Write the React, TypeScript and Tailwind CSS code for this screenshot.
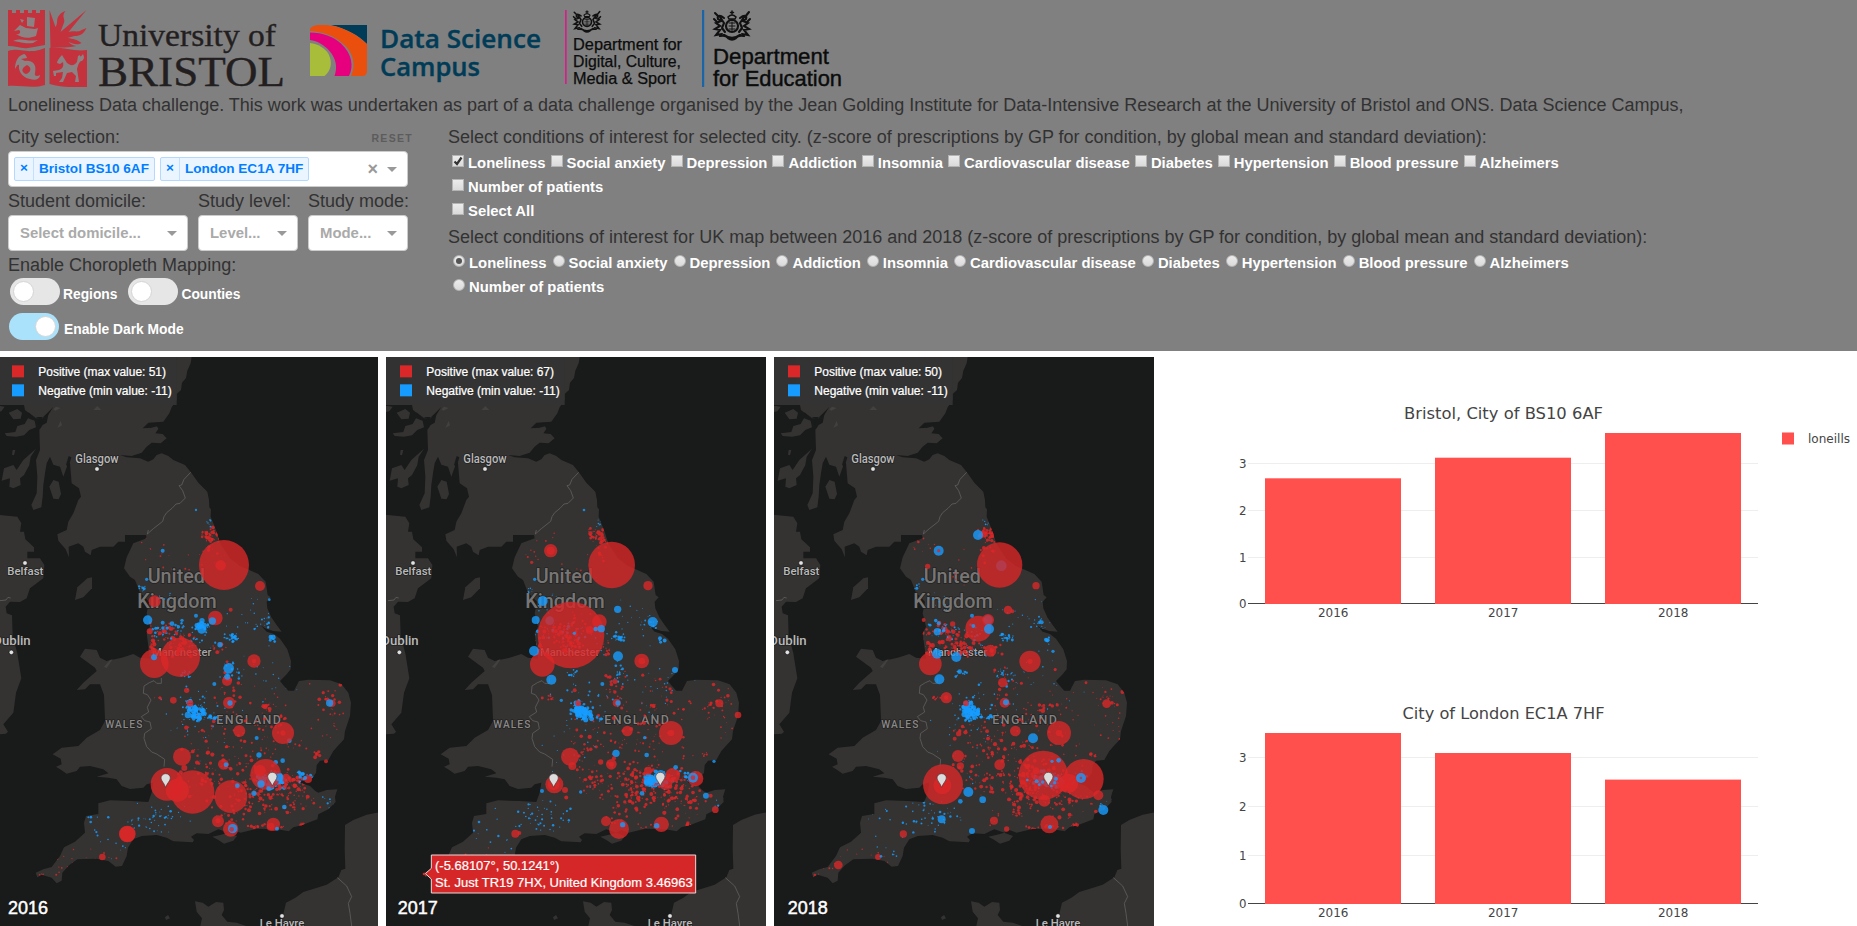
import React from "react";

type Bubble = [number, number, number];
type Cluster = [number, number, number, number, number, number, "r" | "b"];

const RED = "#da2728";
const BLUE = "#169cff";

const LAND = [
  // Great Britain
  "M575 21L572 40 562 62 558 84 546 98 543 120 530 132 530 150 515 172 508 190 490 215 445 218 428 235 445 234 468 222 475 237 466 250 488 252 500 265 482 280 455 278 440 290 425 308 395 318 360 315 380 322 420 325 445 335 460 328 470 315 485 310 505 318 520 330 555 345 575 370 595 398 622 425 627 450 628 472 633 478 632 500 640 520 650 545 655 562 662 582 690 625 720 648 748 660 775 672 797 695 803 735 812 742 800 755 802 775 814 802 830 825 845 845 820 843 795 835 782 826 800 845 822 852 840 866 862 898 873 933 872 958 860 973 840 993 852 1008 865 1022 882 1022 897 993 925 989 990 991 1025 1003 1045 1028 1053 1058 1050 1098 1035 1143 1032 1168 1000 1203 985 1230 960 1232 950 1246 948 1268 938 1283 905 1293 900 1298 930 1308 945 1322 955 1328 980 1320 1012 1318 1005 1340 1007 1356 985 1378 955 1393 952 1408 905 1426 880 1432 866 1444 832 1438 772 1436 722 1448 700 1440 685 1448 655 1438 625 1452 590 1450 573 1460 582 1470 578 1477 520 1474 500 1463 470 1455 425 1458 400 1468 384 1493 380 1518 366 1548 347 1550 325 1533 290 1526 232 1528 207 1546 187 1568 185 1592 170 1600 155 1583 125 1574 112 1582 107 1568 130 1558 155 1551 180 1518 192 1492 225 1475 255 1448 252 1418 258 1398 295 1392 295 1360 330 1351 395 1353 445 1356 455 1328 460 1298 440 1303 430 1313 390 1317 365 1308 350 1288 325 1283 290 1280 325 1270 310 1258 270 1248 240 1250 230 1263 200 1271 180 1258 168 1250 185 1243 182 1226 158 1213 185 1193 235 1188 260 1163 300 1140 315 1113 312 1035 300 1003 270 1003 255 1018 230 1020 250 998 290 963 285 953 240 920 255 896 290 900 300 923 320 933 365 923 400 912 420 923 450 926 445 888 440 850 450 830 440 790 447 755 420 728 405 690 390 680 372 655 380 622 400 580 440 565 438 555 375 555 375 575 355 575 340 590 300 590 275 600 272 616 255 605 250 590 235 580 206 590 207 622 197 598 175 572 172 553 200 540 205 515 220 490 235 450 243 440 237 415 215 400 210 340 206 335 190 380 180 350 160 344 150 320 140 340 135 370 130 405 128 440 124 472 100 480 94 465 110 430 112 380 108 330 120 300 118 240 128 225 140 218 145 195 160 170 128 205 108 205 90 192 75 180 72 165 60 150 60 21Z",
  // Ireland
  "M0 495L52 500 64 520 60 545 72 545 76 568 102 592 102 605 82 605 82 625 120 625 133 645 130 685 110 700 90 715 80 745 60 756 30 755 17 770 20 790 36 796 38 858 52 910 64 985 48 1028 40 1088 10 1123 24 1145 18 1151 -6 1153 -6 495Z",
  // islands
  "M225 750L232 712 262 685 276 682 276 715 250 742Z",
  "M148 410L160 390 176 395 183 432 176 448 160 446Z",
  "M26 188L52 177 66 188 62 206 40 208Z",
  "M14 250L46 246 52 228 74 222 84 205 104 212 108 232 88 240 72 256 48 260 20 258Z",
  "M108 296L92 320 88 345 72 375 60 385 62 405 40 415 28 410 30 385 5 392 12 355 40 345 50 360 70 330Z",
  "M0 168L14 170 4 184 -6 186 -6 168Z",
  "M38 300L46 300 42 316 36 314Z",
  "M637 1460L660 1455 685 1448 711 1458 700 1472 672 1481 655 1470Z",
  "M495 1702L504 1695 510 1705 498 1710Z",
  // France
  "M1140 1386L1100 1394 1060 1410 1035 1425 1034 1500 1036 1556 1024 1560 1015 1582 980 1604 910 1626 885 1644 858 1658 845 1712 900 1728 1140 1728Z",
  "M585 1654L608 1658 625 1670 648 1656 670 1658 672 1680 665 1695 682 1715 710 1718 750 1732 600 1732 606 1705 590 1685Z",
];

const BORDERS = [
  "M572 367L552 388 545 405 537 407 548 422 556 444 540 460 528 462 516 475 500 488 492 500 488 514 460 536 442 552 445 540",
  "M484 984L484 1000 470 1000 462 992 448 998 432 1008 430 1030 442 1034 453 1050 442 1072 446 1086 424 1100 434 1112 450 1116 454 1136 434 1150 432 1165 440 1190 455 1206 470 1212 494 1228 492 1250",
  "M1012 1583L1040 1608 1055 1640 1045 1660 1050 1690 1055 1728",
  "M0 752L18 750 24 742 32 744",
];

// [cx, cy, spreadX, spreadY, count, maxRadius, colour]
const COMMON: Cluster[] = [
  [632, 556, 28, 22, 48, 6.5, "r"],
  [640, 600, 28, 40, 14, 6, "r"],
  [630, 520, 10, 14, 6, 3, "b"],
  [455, 590, 50, 45, 10, 4, "r"],
  [560, 660, 70, 60, 9, 3, "r"],
  [425, 715, 8, 14, 7, 5, "b"],
  [480, 750, 60, 40, 9, 3, "b"],
  [495, 850, 50, 30, 36, 7, "r"],
  [500, 840, 60, 30, 22, 5.5, "b"],
  [550, 885, 38, 34, 48, 6, "r"],
  [455, 895, 16, 24, 18, 7, "r"],
  [580, 860, 80, 50, 26, 4, "b"],
  [692, 862, 22, 14, 26, 5, "b"],
  [790, 820, 30, 22, 16, 4, "b"],
  [740, 800, 70, 50, 14, 2.5, "b"],
  [818, 868, 14, 10, 7, 7, "b"],
  [655, 895, 22, 20, 13, 6, "r"],
  [555, 972, 18, 14, 13, 4, "b"],
  [570, 1070, 18, 16, 40, 7, "b"],
  [590, 1092, 26, 20, 70, 8, "b"],
  [600, 1060, 70, 60, 26, 4, "b"],
  [637, 1103, 14, 6, 10, 6, "b"],
  [690, 970, 28, 34, 20, 4, "b"],
  [690, 1010, 40, 70, 24, 5.5, "r"],
  [800, 1000, 120, 110, 24, 2.5, "b"],
  [820, 1080, 110, 120, 42, 5, "r"],
  [798, 1072, 12, 10, 8, 7, "r"],
  [990, 1040, 45, 50, 20, 6, "r"],
  [1000, 1120, 60, 60, 14, 3, "r"],
  [950, 1213, 8, 10, 7, 6, "r"],
  [640, 1180, 110, 95, 58, 6.5, "r"],
  [800, 1190, 120, 80, 30, 4.5, "r"],
  [560, 1160, 100, 140, 26, 2.5, "b"],
  [480, 1045, 16, 8, 7, 4.5, "r"],
  [620, 1290, 80, 65, 42, 6, "r"],
  [760, 1290, 70, 65, 70, 6, "r"],
  [815, 1290, 46, 26, 70, 7, "b"],
  [850, 1290, 60, 36, 55, 6.5, "r"],
  [880, 1345, 75, 60, 64, 6.5, "r"],
  [760, 1350, 80, 50, 42, 6, "r"],
  [910, 1280, 34, 22, 14, 6, "b"],
  [800, 1430, 60, 8, 14, 5.5, "r"],
  [900, 1424, 12, 6, 6, 6, "r"],
  [680, 1400, 50, 30, 15, 5, "r"],
  [470, 1400, 90, 50, 46, 4, "b"],
  [290, 1410, 50, 50, 8, 4, "b"],
  [360, 1500, 60, 40, 9, 3, "b"],
  [290, 1520, 90, 30, 9, 3, "r"],
  [190, 1545, 50, 35, 8, 4, "r"],
  [120, 1573, 14, 6, 4, 3.5, "r"],
  [990, 1360, 24, 26, 7, 3.5, "b"],
];

type MapSpec = {
  id: string;
  year: string;
  max: string;
  seed: number;
  under: [Bubble, string][];
  extra: Cluster[];
};

const r = (x: number, y: number, s: number): [Bubble, string] => [[x, y, s], RED];
const b = (x: number, y: number, s: number): [Bubble, string] => [[x, y, s], BLUE];

const MAPS: MapSpec[] = [
  {
    id: "m16",
    year: "2016",
    max: "51",
    seed: 11,
    extra: [
      [605, 832, 26, 12, 26, 9, "b"],
      [790, 1295, 18, 16, 26, 10, "b"],
      [835, 1290, 14, 16, 24, 9, "b"],
    ],
    under: [
      r(672, 645, 75), r(662, 646, 16), b(488, 602, 6), b(588, 480, 3.5), r(780, 708, 15), r(464, 754, 18), r(646, 804, 22), b(637, 813, 11),
      b(443, 810, 14), r(449, 844, 9), b(605, 838, 13), b(606, 812, 8), b(588, 797, 6), b(516, 821, 7), b(546, 811, 5), b(488, 818, 6), b(440, 688, 5), b(808, 749, 4), r(692, 779, 6),
      r(463, 941, 43), r(541, 922, 59), b(462, 922, 9), b(686, 955, 16), r(762, 933, 20), r(762, 933, 7), r(681, 993, 15), b(682, 980, 9), r(560, 1021, 8), r(520, 1051, 10), r(570, 1060, 10),
      r(687, 1058, 18), b(690, 1059, 8), b(660, 884, 8), b(819, 862, 8), r(996, 1060, 11), b(989, 1059, 11), b(868, 1172, 7), r(849, 1149, 33), r(849, 1149, 8), r(718, 1143, 18), b(770, 1164, 6),
      b(777, 1215, 8), b(848, 1232, 7), b(827, 1237, 7), r(546, 1220, 27), r(553, 1254, 9), r(670, 1243, 16), b(678, 1244, 7), r(501, 1303, 49), r(578, 1326, 65), r(532, 1321, 35),
      r(693, 1340, 49), b(712, 1307, 7), r(797, 1273, 46), r(780, 1262, 18), b(762, 1330, 8), r(858, 1284, 13), r(924, 1287, 12), b(915, 1284, 6), b(901, 1272, 6), r(978, 1234, 6),
      b(783, 1302, 11), b(838, 1282, 12), b(806, 1316, 7),
      r(654, 1414, 18), r(654, 1412, 8), r(692, 1437, 23), b(698, 1436, 14), r(695, 1438, 7), r(820, 1423, 20), r(812, 1430, 12), b(831, 1436, 6), b(853, 1371, 7), r(382, 1452, 25), r(382, 1452, 24), r(307, 1521, 10), b(272, 1416, 4), b(564, 1095, 10), b(643, 1002, 6),
    ],
  },
  {
    id: "m17",
    year: "2017",
    max: "67",
    seed: 29,
    extra: [
      [760, 1310, 50, 45, 26, 7, "r"],
      [550, 835, 80, 50, 40, 6, "r"],
      [790, 1286, 20, 16, 24, 9, "b"],
    ],
    under: [
      r(671, 645, 70), r(488, 602, 20), r(488, 602, 12), b(588, 480, 4), r(780, 707, 14), b(464, 753, 15), b(443, 810, 12), b(485, 812, 13), r(431, 637, 5), b(440, 688, 5), b(689, 778, 11), b(794, 816, 15),
      r(549, 855, 100), r(634, 815, 22), r(605, 840, 12), b(640, 836, 11), b(623, 837, 7), b(559, 850, 5), r(463, 943, 37), b(438, 903, 15), b(490, 989, 15), b(690, 919, 15), r(761, 933, 22), r(761, 933, 10),
      b(861, 960, 9), r(681, 994, 8), r(686, 1058, 12), b(690, 1059, 8), r(570, 1060, 9), r(994, 1060, 12), r(1050, 1095, 10), r(849, 1149, 36), r(849, 1149, 10), r(718, 1143, 16), b(770, 1163, 5),
      b(684, 1210, 11), b(776, 1215, 7), r(638, 1236, 8), r(670, 1243, 16), r(670, 1243, 8), r(546, 1220, 27), r(553, 1248, 12), r(499, 1303, 27), r(497, 1303, 18), r(531, 1320, 9), b(578, 1326, 5),
      b(782, 1295, 15), b(818, 1276, 16), r(780, 1262, 12), r(854, 1276, 22), r(833, 1300, 20), r(923, 1286, 23), b(915, 1283, 15), r(915, 1283, 7), b(863, 1252, 7), b(954, 1337, 9), r(968, 1337, 6), r(982, 1379, 10),
      b(762, 1330, 7), r(654, 1414, 15), r(693, 1437, 30), b(704, 1424, 8), r(820, 1423, 23), b(806, 1427, 8), r(382, 1451, 12), r(394, 1449, 6), b(273, 1416, 4), b(462, 1323, 6), b(978, 1234, 5), b(520, 1051, 5), b(643, 1002, 6), r(560, 1021, 6),
    ],
  },
  {
    id: "m18",
    year: "2018",
    max: "50",
    seed: 47,
    extra: [
      [760, 1300, 60, 55, 46, 7, "r"],
      [560, 880, 60, 30, 36, 7, "r"],
      [820, 1290, 42, 20, 30, 8, "b"],
      [640, 1200, 105, 75, 30, 6, "r"],
    ],
    under: [
      b(676, 647, 16), r(671, 645, 68), b(606, 555, 15), b(488, 602, 15), r(488, 602, 5), r(455, 649, 8), b(440, 688, 5), r(780, 707, 11), r(696, 780, 13), r(709, 784, 6),
      r(607, 836, 39), b(636, 810, 14), r(636, 810, 18), b(639, 837, 15), b(592, 828, 6), b(588, 797, 6), b(484, 845, 11), b(797, 817, 6), r(530, 822, 8), b(488, 820, 6), r(443, 810, 6),
      r(463, 942, 34), b(483, 911, 15), b(541, 921, 15), b(490, 988, 15), b(551, 965, 7), r(643, 902, 18), b(831, 904, 5), r(762, 934, 32), r(762, 934, 8), r(680, 998, 14),
      r(686, 1058, 15), b(690, 1057, 9), r(511, 1043, 17), r(511, 1043, 7), r(570, 1060, 9), r(992, 1061, 13), r(849, 1149, 36), r(849, 1149, 10), r(718, 1143, 16), b(771, 1165, 15), r(548, 1151, 8), r(536, 1166, 6),
      r(546, 1218, 18), r(553, 1248, 11), r(671, 1244, 16), r(802, 1276, 74), r(923, 1287, 60), r(878, 1300, 29), r(805, 1352, 18), r(780, 1262, 10), b(915, 1284, 15), r(915, 1284, 4), r(967, 1336, 15), b(982, 1380, 15), b(848, 1231, 7), b(828, 1234, 5),
      b(840, 1286, 6), b(782, 1294, 6), b(800, 1296, 5), b(790, 1304, 4), b(836, 1298, 5), b(826, 1308, 4), b(754, 1290, 4),
      r(501, 1303, 60), r(499, 1306, 27), r(499, 1306, 15), b(577, 1326, 15), b(620, 1349, 10), b(553, 1354, 7), b(497, 1408, 12), b(588, 1443, 9), r(654, 1412, 12), r(692, 1437, 8), r(820, 1423, 27), b(822, 1431, 6),
      r(382, 1452, 11), r(306, 1521, 9), r(187, 1545, 13), b(315, 1519, 4), r(904, 1425, 5), b(590, 1090, 10),
    ],
  },
];

function makeRandom(seed: number) {
  let s = seed * 2654435761;
  return () => {
    s = (s + 0x6d2b79f5) | 0;
    let t = Math.imul(s ^ (s >>> 15), 1 | s);
    t = (t + Math.imul(t ^ (t >>> 7), 61 | t)) ^ t;
    return ((t ^ (t >>> 14)) >>> 0) / 4294967296;
  };
}

function scatter(clusters: Cluster[], seed: number) {
  const rand = makeRandom(seed);
  const out: [Bubble, string][] = [];
  clusters.forEach(([cx, cy, sx, sy, n, max, c]) => {
    for (let i = 0; i < n; i++) {
      const x = cx + (rand() + rand() - 1) * sx * 1.2;
      const y = cy + (rand() + rand() - 1) * sy * 1.2;
      const size = 1.4 + Math.pow(rand(), 1.7) * (max - 1.4);
      out.push([[x, y, size], c === "r" ? RED : BLUE]);
    }
  });
  return out;
}

function Place({ x, y, w, size, fill, spacing, children }: { x: number; y: number; w: number; size: number; fill: string; spacing?: number; children: string }) {
  return (
    <text x={x} y={y} fontSize={size} fill={fill} textLength={w} letterSpacing={spacing} lengthAdjust="spacingAndGlyphs" stroke="#1c1c1c" strokeWidth="5" strokeOpacity="0.75" paintOrder="stroke" strokeLinejoin="round" fontFamily="Roboto, sans-serif" fontWeight={500}>
      {children}
    </text>
  );
}

function Pin({ x, y }: { x: number; y: number }) {
  return <path d={`M${x} ${y + 20}C${x - 4} ${y + 8} ${x - 14} ${y} ${x - 14} ${y - 8}A14 13 0 1 1 ${x + 14} ${y - 8}C${x + 14} ${y} ${x + 4} ${y + 8} ${x} ${y + 20}Z`} fill="#dcdcdc" stroke="#4b3a38" strokeWidth="2" />;
}

function BubbleMap({ spec, first }: { spec: MapSpec; first?: boolean }) {
  const small = scatter([...COMMON, ...spec.extra], spec.seed);
  const left = first ? 0 : -6;
  const yearX = spec.year === "2016" ? 24 : spec.year === "2017" ? 29 : 35;
  return (
    <svg className={first ? "block h-[569px] w-[378px] shrink-0" : "block h-[569px] w-[380px] shrink-0"} viewBox={first ? "0 21 1134 1707" : "-6 21 1140 1707"}>
      <defs>
        <clipPath id={spec.id}>
          {LAND.map((d) => <path key={d} d={d} />)}
        </clipPath>
      </defs>
      <rect x={-6} y={21} width={1146} height={1707} fill="#191a1a" />
      {LAND.map((d) => <path key={d} d={d} fill="#343332" />)}
      <g fill="#191a1a">
        <path d="M440 232L456 220 472 222 474 228 452 234Z" />
        <path d="M206 318L214 322 206 350 198 345Z" />
        <path d="M72 168L90 195 122 208 150 182 136 200 104 202 84 186Z" />
      </g>
      <g fill="#424140">
        <path d="M280 180L292 168 304 180Z" />
        <path d="M160 178L168 170 182 174 166 182Z" />
        <path d="M172 234L182 212 186 226Z" />
        <path d="M312 950L330 930 338 928 320 954Z" />
      </g>
      {BORDERS.map((d) => <path key={d} d={d} fill="none" stroke="#62615f" strokeWidth="2.4" strokeLinejoin="round" />)}

      <Place x={226} y={339} w={130} size={36} fill="#b9b9b9">Glasgow</Place>
      <Place x={22} y={675} w={108} size={35} fill="#b9b9b9">Belfast</Place>
      <Place x={-20} y={884} w={112} size={36} fill="#b9b9b9">Dublin</Place>
      <Place x={443} y={699} w={172} size={58} fill="#777675">United</Place>
      <Place x={412} y={775} w={238} size={58} fill="#777675">Kingdom</Place>
      <Place x={456} y={917} w={178} size={32} fill="#a5a5a5">Manchester</Place>
      <Place x={316} y={1134} w={114} size={30} fill="#8a8988" spacing={3}>WALES</Place>
      <Place x={649} y={1123} w={198} size={36} fill="#848382" spacing={4}>ENGLAND</Place>
      <Place x={779} y={1732} w={134} size={34} fill="#b9b9b9">Le Havre</Place>
      <g fill="#e2e2e2" stroke="#111" strokeWidth="2">
        <circle cx={291} cy={357} r={7} />
        <circle cx={75} cy={639} r={7} />
        <circle cx={34} cy={907} r={7} />
        <circle cx={846} cy={1698} r={7} />
      </g>

      <g clipPath={`url(#${spec.id})`}>
        {small.map(([[x, y, s], c], i) => <circle key={i} cx={x} cy={y} r={s} fill={c} fillOpacity={0.86} />)}
      </g>
      {spec.under.map(([[x, y, s], c], i) => <circle key={i} cx={x} cy={y} r={s} fill={c} fillOpacity={0.8} />)}
      <Pin x={497} y={1292} />
      <Pin x={817} y={1288} />

      <rect x={left} y={21} width={530 - left} height={144} fill="#333333" fillOpacity={0.98} />
      <rect x={36} y={46} width={36} height={36} fill={RED} />
      <rect x={36} y={103} width={36} height={36} fill={BLUE} />
      <g fontFamily="Liberation Sans, Arial, sans-serif" fill="#fff">
        <text x={115} y={79} fontSize={36} textLength={383} lengthAdjust="spacingAndGlyphs" stroke="#fff" strokeWidth={0.7}>{`Positive (max value: ${spec.max})`}</text>
        <text x={115} y={135} fontSize={36} textLength={400} lengthAdjust="spacingAndGlyphs" stroke="#fff" strokeWidth={0.7}>Negative (min value: -11)</text>
        <text x={yearX} y={1691} fontSize={54} textLength={120} lengthAdjust="spacingAndGlyphs" stroke="#fff" strokeWidth={1.4}>{spec.year}</text>
      </g>
      {spec.year === "2017" && (
        <g fontFamily="Liberation Sans, Arial, sans-serif" fill="#fff">
          <path d="M130 1515H923V1629H130V1587L112 1571 130 1555Z" fill="#d62728" stroke="#e9d9d8" strokeWidth={3} />
          <circle cx={108} cy={1572} r={4} fill={RED} />
          <text x={141} y={1560} fontSize={39} textLength={373} lengthAdjust="spacingAndGlyphs" stroke="#fff" strokeWidth={0.6}>(-5.68107°, 50.1241°)</text>
          <text x={141} y={1611} fontSize={39} textLength={773} lengthAdjust="spacingAndGlyphs" stroke="#fff" strokeWidth={0.6}>St. Just TR19 7HX, United Kingdom 3.46963</text>
        </g>
      )}
    </svg>
  );
}

type ChartSpec = { title: string; tw: number; ty: number; base: number; ticks: number[]; tops: number[] };

const CHARTS: ChartSpec[] = [
  { title: "Bristol, City of BS10 6AF", tw: 199, ty: 419, base: 603.5, ticks: [557.5, 510.5, 463.5], tops: [478.3, 457.7, 433] },
  { title: "City of London EC1A 7HF", tw: 202, ty: 719, base: 903.5, ticks: [855.5, 806.5, 757.5], tops: [733, 753, 779.6] },
];

function Charts() {
  return (
    <svg className="block h-[569px] w-[703px] shrink-0" viewBox="1154 357 703 569" fontFamily="DejaVu Sans, Verdana, sans-serif" fill="#444">
      {CHARTS.map((c) => (
        <g key={c.title}>
          <text x={1503.5 - c.tw / 2} y={c.ty} fontSize={16} textLength={c.tw} lengthAdjust="spacingAndGlyphs">{c.title}</text>
          {c.ticks.map((t, i) => (
            <g key={t}>
              <rect x={1248} y={t - 0.5} width={510} height={1} fill="#eee" />
              <text x={1239} y={t + 4} fontSize={11.5} textLength={7.5} lengthAdjust="spacingAndGlyphs">{i + 1}</text>
            </g>
          ))}
          <text x={1239} y={c.base + 4} fontSize={11.5} textLength={7.5} lengthAdjust="spacingAndGlyphs">0</text>
          <rect x={1248} y={c.base - 0.5} width={510} height={1} fill="#444" />
          {c.tops.map((t, i) => (
            <g key={i}>
              <rect x={1265 + i * 170} y={t} width={136} height={c.base + 0.5 - t} fill="#ff504e" />
              <text x={1318 + i * 170} y={c.base + 13.5} fontSize={11.5} textLength={30.5} lengthAdjust="spacingAndGlyphs">{2016 + i}</text>
            </g>
          ))}
        </g>
      ))}
      <rect x={1782} y={432.5} width={12} height={12} fill="#ff504e" />
      <text x={1808} y={443} fontSize={12} textLength={42} lengthAdjust="spacingAndGlyphs">loneills</text>
    </svg>
  );
}

function BristolLogo() {
  return (
    <svg className="block h-[84px] w-[290px]" viewBox="8 7 290 84">
      <g fill="#c4323d">
        <path d="M8 10h4v3h4v-3h4v3h4v-3h4v3h4v-3h4v3h4v-3h5v35c-6 1-10 2-17 3-7 1-12-2-20-2z" />
        <path d="M49.500 10l6 17c3-4 0-8 4-12 1-2 3-3 6-4-5 6 1 8-2 13l-3 8 26-22-18 22c5-2 9 1 13-2l5-2c-3 6-6 8-12 8l-7 2c6 1 9 1 14 5-5 3-9 0-13-1 3 3 4 3 8 4-7 2-17 1-26 2z" />
        <path d="M8 51c10-3 17 1 24 0 6 0 9-2 13-3v37c-12 4-24 0-37 1z" />
        <path d="M49.500 48c12-2 24 4 37.500 2v37c-12 0-25 1-37.500-3z" />
      </g>
      <g fill="#8b8284">
        <path d="M20 19l4 1-2 3zM27 17l8 1-1 9-7-1zM20 25l6 3 9 1 3-1-2 8c-8 3-14 2-20-2 6 1 4-4 3-4l-5 1z" />
        <path d="M13 41c9-4 13 1 25-1l-5 3c-9 1-12-1-20-2z" />
        <path d="M24 54c-7 2-9 9-9 15 2-4 3-5 4-4-1 9 6 13 11 14 5 2 10 0 10-4-3 2-6 1-5-2 2-9-3-13-10-12l-4-2 6-1c-1-3-2-4-3-4zm3 11c6 3 3 8-1 9-5-2-5-6 1-9z" fillRule="evenodd" />
        <path d="M62 55c-3 3-5 6-5 8l3 1 3-2c1 5-1 7-4 8l-6 1 1 5h2v-3l7-1-1 6-3 4h4l4-9 5-1 4 4-1 6h4l-2-13c2-7 3-8 5-8 3-3 2-4 1-7-2 3-3 3-3 1l-2 1-1 6c-4 5-7 3-10 1z" />
      </g>
      <g fill="#231f20" stroke="#231f20" strokeWidth={0.35} fontFamily="Liberation Serif, Times New Roman, serif">
        <text x={98} y={46} fontSize={31} textLength={178} lengthAdjust="spacingAndGlyphs">University of</text>
        <text x={98} y={86} fontSize={43} textLength={187} lengthAdjust="spacingAndGlyphs">BRISTOL</text>
      </g>
    </svg>
  );
}

function CampusLogo() {
  return (
    <svg className="block h-[84px] w-[250px]" viewBox="298 7 250 84">
      <path d="M331 25h36v19c-9-9-20-15-36-19z" fill="#003c57" />
      <path d="M310 31v-2.500c2-2 5-3.500 9-3.500 12-.5 22 2 31 7 8 4 12 8 17 12v27q0 5-5 5h-11c5-10 3-24-9-33-9-8-19-11-32-12z" fill="#ea4f0d" />
      <path d="M310 32.500c13 0 23 4 31 11 11 10 13 23 8 32.500h-14.500c3-8 2-17-5-25-5-6-12-10-19.500-11z" fill="#e6007e" />
      <path d="M310 43c8 1 15 5 18.500 11 4 8 3 16-4 22H310z" fill="#a8bd3a" />
      <g fill="#003c57" stroke="#003c57" strokeWidth={0.4} fontFamily="Open Sans, Noto Sans, sans-serif" fontWeight={600}>
        <text x={380} y={48} fontSize={26} textLength={161} lengthAdjust="spacingAndGlyphs">Data Science</text>
        <text x={380} y={76} fontSize={26} textLength={100} lengthAdjust="spacingAndGlyphs">Campus</text>
      </g>
    </svg>
  );
}

function Arms() {
  return (
    <g fill="none" stroke="#111" strokeWidth={1.5} strokeLinecap="round">
      <circle cx={20} cy={16} r={6} strokeWidth={2.200} />
      <path d="M17 13h6M17 16h6M17 19h6M20 12v9" strokeWidth={1} />
      <path d="M16 7q4-4 8 0l-1 2h-6zM20 1v3M18.500 2.500h3" />
      <path d="M12 8c-5-4-7-2-6 1l3 2-5 2 4 3-5 3 5 1-4 5 6-1M8 7l4 6-2 5 3 4M3 3l3 3M2 9l3 3" strokeWidth={2.100} />
      <path d="M28 8c5-4 7-2 6 1l-3 2 5 2-4 3 5 3-5 1 4 5-6-1M32 7l-4 6 2 5-3 4M37 2l-4 5M38 9l-3 3" strokeWidth={2.100} />
      <path d="M8 26q6-1 8 2 4 3 8 0 2-3 8-2M12 25q8 6 16 0" strokeWidth={2.200} />
    </g>
  );
}

function DepartmentLogos() {
  return (
    <svg className="block h-[84px] w-[300px]" viewBox="560 7 300 84">
      <rect x={565} y={10} width={1.700} height={74} fill="#d5208b" />
      <svg x={572} y={10} width={30} height={23} viewBox="0 0 40 31" preserveAspectRatio="none"><Arms /></svg>
      <g fill="#0b0c0c" fontFamily="Liberation Sans, Arial, sans-serif">
        <g fontSize={16} stroke="#0b0c0c" strokeWidth={0.25}>
          <text x={573} y={50} textLength={109} lengthAdjust="spacingAndGlyphs">Department for</text>
          <text x={573} y={67} textLength={108} lengthAdjust="spacingAndGlyphs">Digital, Culture,</text>
          <text x={573} y={84} textLength={103} lengthAdjust="spacingAndGlyphs">Media &amp; Sport</text>
        </g>
        <g fontSize={21.5} stroke="#0b0c0c" strokeWidth={0.4}>
          <text x={713} y={64} textLength={116} lengthAdjust="spacingAndGlyphs">Department</text>
          <text x={713} y={86} textLength={129} lengthAdjust="spacingAndGlyphs">for Education</text>
        </g>
      </g>
      <rect x={702} y={10} width={2.200} height={77} fill="#1a65a8" />
      <svg x={712} y={10} width={40} height={31} viewBox="0 0 40 31"><Arms /></svg>
    </svg>
  );
}

const CONDITIONS = ["Loneliness", "Social anxiety", "Depression", "Addiction", "Insomnia", "Cardiovascular disease", "Diabetes", "Hypertension", "Blood pressure", "Alzheimers"];

function Check({ label, on }: { label: string; on?: boolean }) {
  return (
    <label className="flex h-6 items-center whitespace-nowrap text-[14.85px] font-bold text-white">
      <span className="mb-[4px] mr-[4px] flex h-3 w-3 items-center justify-center border border-[#b4b4b4] bg-gradient-to-b from-[#ececec] to-[#dadada]">
        {on && (
          <svg className="h-[10px] w-[10px]" viewBox="0 0 10 10"><path d="M1.500 5.500L4 8L8.500 1.500" fill="none" stroke="#333" strokeWidth={2.200} /></svg>
        )}
      </span>
      {label}
    </label>
  );
}

function Radio({ label, on }: { label: string; on?: boolean }) {
  return (
    <label className="flex h-6 items-center whitespace-nowrap text-[14.85px] font-bold text-white">
      <span className="mb-[4px] mr-[4px] flex h-3 w-3 items-center justify-center rounded-full border border-[#b4b4b4] bg-gradient-to-b from-[#ececec] to-[#dadada]">
        {on && <span className="h-[6px] w-[6px] rounded-full bg-[#555]" />}
      </span>
      {label}
    </label>
  );
}

function Arrow() {
  return <span className="h-0 w-0 border-x-[5px] border-t-[5px] border-x-transparent border-t-[#999]" />;
}

function Tag({ label }: { label: string }) {
  return (
    <span className="flex h-6 items-center rounded-[2px] border border-[#b5d8ff] bg-[#ebf5ff] text-[13.55px] font-bold leading-none text-[#007eff]">
      <span className="flex h-full w-[19px] items-center justify-center border-r border-[#c2e0ff] pb-[3px]">×</span>
      <span className="whitespace-nowrap px-[5px]">{label}</span>
    </span>
  );
}

function Picker({ label, placeholder, wide }: { label: string; placeholder: string; wide?: boolean }) {
  return (
    <div className={wide ? "w-[180px]" : "w-[100px]"}>
      <div className="h-7 whitespace-nowrap leading-7">{label}</div>
      <div className="flex h-9 items-center justify-between rounded border border-[#ccc] bg-white pl-[11px] pr-[10px] text-[14.9px] font-bold text-[#aaa]">
        {placeholder}
        <Arrow />
      </div>
    </div>
  );
}

function Toggle({ label, on }: { label: string; on?: boolean }) {
  return (
    <label className="flex h-[27px] items-center">
      <span className={on ? "mr-[2px] flex h-[27px] w-[50px] items-center justify-end rounded-full bg-[#abe2fb] px-[3px]" : "flex h-[27px] w-[50px] items-center rounded-full bg-[#e6e6e6] px-[3px]"}>
        <span className="h-[21px] w-[21px] rounded-full border border-[#d5d5d5] bg-white" />
      </span>
      <span className="ml-[3px] pt-[7px] text-[13.8px] font-bold leading-5 text-white">{label}</span>
    </label>
  );
}

export default function App() {
  return (
    <div className="h-[926px] w-[1857px] overflow-hidden bg-white font-['Liberation_Sans',Arial,sans-serif] text-[#323232]">
      <header className="h-[351px] bg-[#808080] pl-2 pt-[7px] text-[18px]">
        <div className="flex h-[84px]">
          <BristolLogo />
          <CampusLogo />
          <div className="w-3" />
          <DepartmentLogos />
        </div>
        <p className="h-[32px] whitespace-nowrap leading-[28px]">
          Loneliness Data challenge. This work was undertaken as part of a data challenge organised by the Jean Golding Institute for Data-Intensive Research at the University of Bristol and ONS. Data Science Campus,
        </p>
        <div className="flex">
          <div className="w-[440px]">
            <div className="flex h-7 w-[405px] items-center justify-between">
              <span>City selection:</span>
              <span className="pt-1 text-[10.5px] font-bold tracking-[1.3px] text-[#5c5c5c]">RESET</span>
            </div>
            <div className="flex h-9 w-[400px] items-center gap-[5px] rounded border border-[#ccc] bg-white pl-[5px] pr-[10px]">
              <Tag label="Bristol BS10 6AF" />
              <Tag label="London EC1A 7HF" />
              <span className="ml-auto mr-1 text-[18px] font-bold leading-none text-[#999]">×</span>
              <Arrow />
            </div>
            <div className="flex gap-[10px]">
              <Picker label="Student domicile:" placeholder="Select domicile..." wide />
              <Picker label="Study level:" placeholder="Level..." />
              <Picker label="Study mode:" placeholder="Mode..." />
            </div>
            <div className="h-[27px] leading-7">Enable Choropleth Mapping:</div>
            <div className="flex gap-[11px] pl-[2px]">
              <Toggle label="Regions" />
              <Toggle label="Counties" />
            </div>
            <div className="flex pl-px pt-2">
              <Toggle label="Enable Dark Mode" on />
            </div>
          </div>
          <div>
            <div className="h-7 whitespace-nowrap leading-7">Select conditions of interest for selected city. (z-score of prescriptions by GP for condition, by global mean and standard deviation):</div>
            <div className="pl-1">
              <div className="flex gap-[5px]">
                {CONDITIONS.map((c, i) => <Check key={c} label={c} on={i === 0} />)}
              </div>
              <Check label="Number of patients" />
              <Check label="Select All" />
            </div>
            <div className="h-7 whitespace-nowrap leading-7">Select conditions of interest for UK map between 2016 and 2018 (z-score of prescriptions by GP for condition, by global mean and standard deviation):</div>
            <div className="pl-[5px]">
              <div className="flex gap-[6px]">
                {CONDITIONS.map((c, i) => <Radio key={c} label={c} on={i === 0} />)}
              </div>
              <Radio label="Number of patients" />
            </div>
          </div>
        </div>
      </header>
      <main className="flex h-[575px] gap-2 pt-[6px]">
        <BubbleMap spec={MAPS[0]} first />
        <BubbleMap spec={MAPS[1]} />
        <div className="flex">
          <BubbleMap spec={MAPS[2]} />
          <Charts />
        </div>
      </main>
    </div>
  );
}
